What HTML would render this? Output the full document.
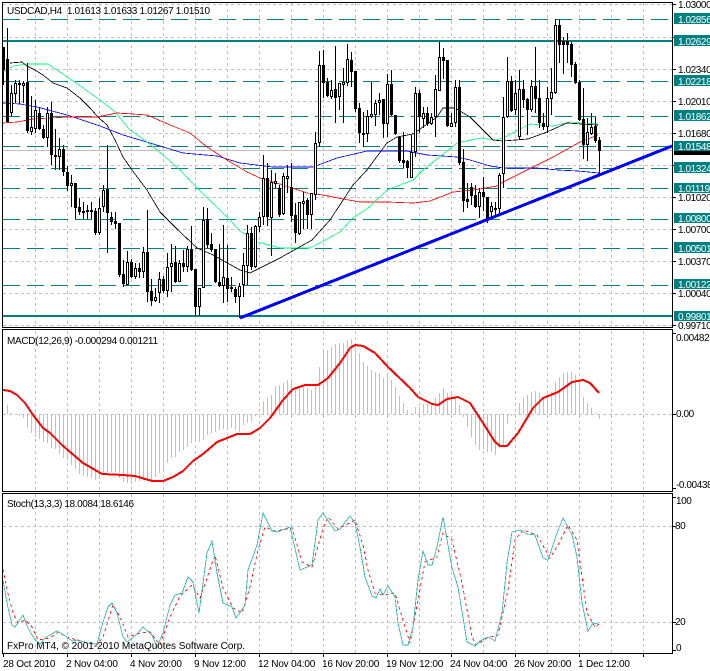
<!DOCTYPE html>
<html><head><meta charset="utf-8"><style>
html,body{margin:0;padding:0;background:#fff;width:710px;height:671px;overflow:hidden}
svg{display:block}
text{font-family:"Liberation Sans",sans-serif;font-size:10px;fill:#000;letter-spacing:-.42px}
.l{fill:#fff}
.t{letter-spacing:-.2px}
.h{letter-spacing:0}
</style></head><body>
<svg width="710" height="671" viewBox="0 0 710 671" xmlns="http://www.w3.org/2000/svg">
<rect width="710" height="671" fill="#fff"/>
<g shape-rendering="crispEdges" fill="none">
<!-- grid -->
<path stroke="#c0c0c0" stroke-dasharray="3 3" d="M35.5 3V327M67.5 3V327M99.5 3V327M131.5 3V327M163.5 3V327M195.5 3V327M227.5 3V327M259.5 3V327M291.5 3V327M323.5 3V327M355.5 3V327M387.5 3V327M419.5 3V327M451.5 3V327M483.5 3V327M515.5 3V327M547.5 3V327M579.5 3V327M611.5 3V327M643.5 3V327
M35.5 331V491M67.5 331V491M99.5 331V491M131.5 331V491M163.5 331V491M195.5 331V491M227.5 331V491M259.5 331V491M291.5 331V491M323.5 331V491M355.5 331V491M387.5 331V491M419.5 331V491M451.5 331V491M483.5 331V491M515.5 331V491M547.5 331V491M579.5 331V491M611.5 331V491M643.5 331V491
M35.5 494V653M67.5 494V653M99.5 494V653M131.5 494V653M163.5 494V653M195.5 494V653M227.5 494V653M259.5 494V653M291.5 494V653M323.5 494V653M355.5 494V653M387.5 494V653M419.5 494V653M451.5 494V653M483.5 494V653M515.5 494V653M547.5 494V653M579.5 494V653M611.5 494V653M643.5 494V653
M3 4.5H672M3 37.5H672M3 69.5H672M3 101.5H672M3 133.5H672M3 165.5H672M3 197.5H672M3 229.5H672M3 261.5H672M3 293.5H672M3 325.5H672
M3 414.5H672M3 526.5H672M3 622.5H672"/>
<path stroke="#c0c0c0" d="M3 150.5H672"/>
<!-- teal levels -->
<path stroke="#008080" stroke-dasharray="17 7" d="M3 19.5H672M3 81.5H672M3 116.5H672M3 146.5H672M3 168.5H672M3 188.5H672M3 219.5H672M3 248.5H672M3 285.5H672"/>
<path stroke="#008080" stroke-width="2" d="M3 41H672M3 316H672"/>
<!-- moving averages -->
<g stroke-width=".8">
<path stroke="#0000ff" d="M3 103L20 104L37 107L67 115L100 126L123 135L150 143L183 153L217 156L240 163L273 167L313 167L337 158L367 151L407 151L427 155L457 157L470 160L490 166L503 168L537 168L558 170L578 171L599 173"/>
<path stroke="#ff0000" d="M3 123L17 122L33 119L50 118L67 117L97 117L117 113L147 115L170 125L190 133L207 147L227 160L247 172L260 178L283 185L307 193L323 195L343 199L360 202L387 202L413 203L430 201L453 192L473 190L497 186L503 182L527 170L533 167L553 157L580 142L598 135"/>
<path stroke="#00ff7f" d="M3 72L13 66L27 64L48 64L67 77L83 88L97 98L113 110L130 130L147 142L163 155L180 170L197 188L227 217L240 231L257 242L280 248L310 248L340 232L353 218L368 208L387 190L413 180L423 170L457 143L480 138L495 140L503 138L530 124L553 126L570 122L598 124"/>
<path stroke="#000" d="M10 63L22 62L27 66L35 70L43 75L53 83L67 88L80 98L90 108L98 117L107 125L115 140L123 157L132 170L147 190L160 212L177 229L197 248L213 255L240 270L250 273L280 258L312 240L330 220L353 185L367 170L387 143L397 137L413 134L437 117L443 108L455 108L470 117L480 127L493 140L503 141L528 139L547 132L567 123L598 125"/>
</g>
<!-- candles wicks -->
<path stroke="#000" d="M3.5 47V85M7.5 28V123M11.5 85V117M15.5 80V103M19.5 80V104M23.5 81V103M27.5 63V133M31.5 96V135M35.5 100V133M39.5 107V130M43.5 125V139M47.5 107V147M51.5 102V165M55.5 129V170M59.5 138V170M63.5 145V176M67.5 166V191M71.5 175V207M75.5 183V219M79.5 198V215M83.5 202V219M87.5 205V219M91.5 202V219M95.5 208V235M99.5 198V235M103.5 185V212M107.5 145V253M111.5 212V225M115.5 212V229M119.5 223V277M123.5 260V287M127.5 251V286M131.5 259V278M135.5 263V279M139.5 263V278M143.5 247V278M147.5 210V302M151.5 279V306M155.5 288V302M159.5 272V303M163.5 276V293M167.5 253V297M171.5 244V292M175.5 246V283M179.5 260V282M183.5 250V272M187.5 246V272M191.5 226V271M195.5 269V316M199.5 288V316M203.5 207V288M207.5 208V248M211.5 233V252M215.5 249V283M219.5 244V287M223.5 225V303M227.5 245V302M231.5 277V292M235.5 287V303M239.5 283V318M243.5 253V297M247.5 225V285M251.5 227V270M255.5 225V268M259.5 212V232M263.5 155V225M267.5 163V226M271.5 170V256M275.5 173V188M279.5 185V217M283.5 173V215M287.5 165V193M291.5 163V222M295.5 203V243M299.5 202V235M303.5 192V229M307.5 198V229M311.5 193V229M315.5 132V200M319.5 51V147M323.5 50V98M327.5 78V97M331.5 80V99M335.5 46V123M339.5 83V110M343.5 68V123M347.5 44V86M351.5 52V87M355.5 71V112M359.5 103V143M363.5 112V147M367.5 110V142M371.5 82V118M375.5 100V126M379.5 93V115M383.5 99V138M387.5 74V137M391.5 70V116M395.5 115V135M399.5 137V163M403.5 132V168M407.5 160V178M411.5 135V178M415.5 87V157M419.5 90V133M423.5 107V128M427.5 107V126M431.5 113V125M435.5 75V137M439.5 42V91M443.5 48V79M447.5 60V127M451.5 113V127M455.5 80V127M459.5 80V165M463.5 149V212M467.5 183V208M471.5 183V205M475.5 185V208M479.5 188V218M483.5 177V211M487.5 197V223M491.5 202V218M495.5 202V218M499.5 173V213M503.5 97V188M507.5 57V118M511.5 76V112M515.5 80V115M519.5 70V140M523.5 80V108M527.5 98V135M531.5 80V112M535.5 47V113M539.5 80V128M543.5 113V130M547.5 87V133M551.5 68V115M555.5 19V94M559.5 19V63M563.5 37V74M567.5 33V63M571.5 42V77M575.5 62V84M579.5 80V121M583.5 88V159M587.5 118V161M591.5 113V135M595.5 117V143M599.5 137V174"/>
<!-- candle bodies -->
<path stroke="#000" stroke-width="3" d="M3.5 47V70M7.5 59V122M19.5 83V85M27.5 82V131M39.5 113V129M43.5 129V138M51.5 113V155M55.5 155V157M63.5 149V172M67.5 172V186M75.5 183V208M79.5 207V212M83.5 211V213M87.5 210V212M91.5 210V212M95.5 211V233M107.5 189V213M111.5 217V222M115.5 221V224M119.5 223V275M123.5 274V284M131.5 262V277M139.5 268V272M147.5 252V292M151.5 291V301M163.5 279V291M175.5 262V282M183.5 263V267M191.5 249V270M195.5 269V307M207.5 219V245M211.5 244V250M215.5 249V282M219.5 282V286M227.5 278V289M231.5 287V289M235.5 289V297M251.5 233V267M267.5 178V217M279.5 188V215M291.5 187V216M295.5 215V233M307.5 200V215M323.5 65V83M327.5 82V96M335.5 89V98M351.5 60V72M355.5 71V109M359.5 108V133M363.5 133V135M383.5 99V124M391.5 84V115M395.5 115V134M399.5 137V161M403.5 160V163M407.5 161V168M419.5 93V117M427.5 113V124M443.5 57V61M447.5 60V126M459.5 87V163M463.5 162V201M467.5 199V202M471.5 187V196M475.5 195V207M483.5 192V197M487.5 197V220M495.5 208V210M511.5 81V111M523.5 89V100M527.5 99V110M535.5 86V99M539.5 98V123M543.5 123V127M559.5 25V45M563.5 41V45M567.5 41V45M571.5 44V65M575.5 64V83M579.5 82V120M583.5 119V145M595.5 126V141M599.5 140V151
M11.5 93V113M15.5 83V94M23.5 83V86M31.5 127V132M35.5 110V129M47.5 113V138M59.5 149V157M71.5 183V186M99.5 208V233M103.5 190V207M127.5 262V285M135.5 268V277M143.5 252V272M155.5 297V301M159.5 279V293M167.5 267V291M171.5 263V267M179.5 263V282M187.5 249V267M199.5 288V307M203.5 220V288M223.5 277V286M239.5 286V297M243.5 265V285M247.5 233V266M255.5 226V267M259.5 217V227M263.5 178V217M271.5 182V218M275.5 181V184M283.5 176V214M287.5 176V179M299.5 202V234M303.5 201V204M311.5 193V215M315.5 143V195M319.5 65V143M331.5 90V97M339.5 83V97M343.5 82V85M347.5 59V83M367.5 116V134M371.5 114V117M375.5 103V115M379.5 100V103M387.5 84V124M411.5 152V178M415.5 93V152M423.5 113V119M431.5 117V124M435.5 89V117M439.5 57V91M451.5 123V127M455.5 87V123M479.5 192V207M491.5 206V212M499.5 175V209M503.5 117V174M507.5 81V117M515.5 93V110M519.5 89V137M531.5 86V110M547.5 98V127M551.5 92V99M555.5 25V93M587.5 132V145M591.5 127V134"/>
<path stroke="#fff" d="M11.5 94V112M15.5 84V93M23.5 84V85M31.5 128V131M35.5 111V128M47.5 114V137M59.5 150V156M71.5 184V185M99.5 209V232M103.5 191V206M127.5 263V284M135.5 269V276M143.5 253V271M155.5 298V300M159.5 280V292M167.5 268V290M171.5 264V266M179.5 264V281M187.5 250V266M199.5 289V306M203.5 221V287M223.5 278V285M239.5 287V296M243.5 266V284M247.5 234V265M255.5 227V266M259.5 218V226M263.5 179V216M271.5 183V217M275.5 182V183M283.5 177V213M287.5 177V178M299.5 203V233M303.5 202V203M311.5 194V214M315.5 144V194M319.5 66V142M331.5 91V96M339.5 84V96M343.5 83V84M347.5 60V82M367.5 117V133M371.5 115V116M375.5 104V114M379.5 101V102M387.5 85V123M411.5 153V177M415.5 94V151M423.5 114V118M431.5 118V123M435.5 90V116M439.5 58V90M451.5 124V126M455.5 88V122M479.5 193V206M491.5 207V211M499.5 176V208M503.5 118V173M507.5 82V116M515.5 94V109M519.5 90V136M531.5 87V109M547.5 99V126M551.5 93V98M555.5 26V92M587.5 133V144M591.5 128V133"/>
<!-- trend line -->
<path stroke="#0000ff" stroke-width="3" d="M240 318L672 146"/>
<!-- MACD hist -->
<path stroke="#c0c0c0" d="M7.5 405V414M11.5 413V414M15.5 414V415M19.5 414V416M23.5 414V418M27.5 414V428M31.5 414V433M35.5 414V437M39.5 414V439M43.5 414V442M47.5 414V443M51.5 414V448M55.5 414V449M59.5 414V454M63.5 414V458M67.5 414V460M71.5 414V465M75.5 414V469M79.5 414V474M83.5 414V476M87.5 414V477M91.5 414V478M95.5 414V480M99.5 414V479M103.5 414V473M107.5 414V472M111.5 414V472M115.5 414V472M119.5 414V478M123.5 414V482M127.5 414V483M131.5 414V483M135.5 414V482M139.5 414V481M143.5 414V480M147.5 414V480M151.5 414V480M155.5 414V477M159.5 414V473M163.5 414V470M167.5 414V463M171.5 414V458M175.5 414V457M179.5 414V452M183.5 414V450M187.5 414V447M191.5 414V443M195.5 414V440M199.5 414V442M203.5 414V440M207.5 414V435M211.5 414V433M215.5 414V432M219.5 414V430M223.5 414V429M227.5 414V428M231.5 414V428M235.5 414V430M239.5 414V432M243.5 414V425M247.5 414V423M251.5 414V422M255.5 414V416M259.5 413V414M263.5 401V414M267.5 398V414M271.5 395V414M275.5 386V414M279.5 385V414M283.5 383V414M287.5 380V414M291.5 379V414M295.5 387V414M299.5 388V414M303.5 387V414M307.5 388V414M311.5 390V414M315.5 385V414M319.5 367V414M323.5 352V414M327.5 350V414M331.5 347V414M335.5 344V414M339.5 343V414M343.5 343V414M347.5 340V414M351.5 339V414M355.5 343V414M359.5 353V414M363.5 362V414M367.5 366V414M371.5 370V414M375.5 372V414M379.5 373V414M383.5 378V414M387.5 374V414M391.5 380V414M395.5 387V414M399.5 396V414M403.5 403V414M407.5 410V414M411.5 413V414M415.5 407V414M419.5 407V414M423.5 404V414M427.5 404V414M431.5 404V414M435.5 398V414M439.5 393V414M443.5 388V414M447.5 393V414M451.5 393V414M455.5 398V414M459.5 405V414M463.5 414V417M467.5 414V427M471.5 414V437M475.5 414V445M479.5 414V450M483.5 414V449M487.5 414V452M491.5 414V452M495.5 414V455M499.5 414V448M503.5 414V445M507.5 414V424M511.5 414V416M519.5 403V414M523.5 398V414M527.5 395V414M531.5 392V414M535.5 391V414M539.5 393V414M543.5 398V414M547.5 397V414M551.5 392V414M555.5 382V414M559.5 377V414M563.5 373V414M567.5 372V414M571.5 372V414M575.5 375V414M579.5 380V414M583.5 397V414M587.5 403V414M591.5 408V414M595.5 413V414M599.5 414V419"/>
<path stroke="#ff0000" stroke-width="2" d="M3 390L10 391L17 395L25 403L33 415L43 428L50 433L62 445L70 452L83 463L102 474L123 475L135 476L152 481L163 481L173 477L183 471L193 461L203 454L217 442L237 434L250 434L260 428L270 418L283 400L293 389L305 385L318 385L328 378L340 363L350 348L355 345L363 346L375 353L388 367L410 388L418 397L432 404L438 405L447 399L458 397L470 403L483 423L495 442L500 446L507 446L518 433L533 408L543 398L558 392L572 382L583 380L590 383L599 393"/>
<!-- Stoch -->
<path stroke="#ff0000" stroke-width=".8" stroke-dasharray="3 3" d="M3 569L7 590L13 613L18 623L25 620L32 627L38 640L50 638L58 632L67 637L80 641L97 645L103 637L113 605L120 617L128 637L140 633L150 632L160 645L170 617L180 596L192 585L200 598L215 555L223 588L233 608L242 613L250 587L258 550L265 527L275 531L292 528L302 562L312 567L322 532L328 517L338 529L355 520L363 545L368 570L375 593L383 595L395 593L402 617L410 643L418 600L425 562L437 557L443 533L452 540L462 583L472 637L476 645L487 638L498 635L508 590L515 540L523 530L537 535L550 558L558 545L568 525L577 540L587 613L595 627L599 624"/>
<path stroke="#20b2aa" stroke-width=".8" d="M3 580L7 603L12 625L15 627L23 615L28 628L35 640L40 644L45 638L50 635L57 631L67 637L72 641L78 640L87 643L97 644L103 622L108 607L112 603L117 613L123 637L127 642L137 634L143 627L152 635L157 647L163 633L170 605L175 595L182 593L188 577L193 582L199 613L207 553L212 541L217 573L223 603L232 607L236 618L245 605L248 570L257 545L263 513L272 531L277 532L290 527L300 570L312 565L318 520L323 513L335 531L340 529L350 516L355 523L360 547L365 577L372 596L376 598L380 589L383 595L388 586L395 597L398 623L403 645L408 645L413 627L418 580L423 551L428 565L432 565L437 547L443 517L452 568L458 587L467 642L475 646L480 641L488 637L495 641L502 613L507 563L512 532L520 530L527 534L535 535L543 558L548 560L557 533L563 518L572 535L577 557L582 603L588 631L593 623L598 624"/>
<!-- frames -->
<path stroke="#000" d="M2.5 2.5H672.5V327.5H2.5ZM2.5 329.5H672.5V491.5H2.5ZM2.5 493.5H672.5V653.5H2.5Z"/>
<path stroke="#000" d="M673 4.5h3M673 37.5h3M673 69.5h3M673 101.5h3M673 133.5h3M673 165.5h3M673 197.5h3M673 229.5h3M673 261.5h3M673 293.5h3M673 325.5h3M673 333.5h3M673 414.5h3M673 488.5h3M673 497.5h3M673 526.5h3M673 622.5h3M673 650.5h3
M3.5 654v3M67.5 654v3M131.5 654v3M195.5 654v3M259.5 654v3M323.5 654v3M387.5 654v3M451.5 654v3M515.5 654v3M579.5 654v3M643.5 654v3"/>
</g>
<!-- axis labels -->
<text x="678" y="8">1.03000</text>
<text x="678" y="73">1.02340</text>
<text x="678" y="105">1.02010</text>
<text x="678" y="137">1.01680</text>
<text x="678" y="201">1.01020</text>
<text x="678" y="233">1.00700</text>
<text x="678" y="265">1.00370</text>
<text x="678" y="297">1.00040</text>
<text x="678" y="329">0.99710</text>
<g shape-rendering="crispEdges">
<rect x="674" y="150" width="36" height="5" fill="#000"/>
<rect x="674" y="13" width="36" height="11" fill="#008080"/>
<rect x="674" y="35" width="36" height="11" fill="#008080"/>
<rect x="674" y="75" width="36" height="11" fill="#008080"/>
<rect x="674" y="110" width="36" height="11" fill="#008080"/>
<rect x="674" y="141" width="36" height="10" fill="#008080"/>
<rect x="674" y="162" width="36" height="11" fill="#008080"/>
<rect x="674" y="183" width="36" height="10" fill="#008080"/>
<rect x="674" y="213" width="36" height="10" fill="#008080"/>
<rect x="674" y="242" width="36" height="11" fill="#008080"/>
<rect x="674" y="279" width="36" height="10" fill="#008080"/>
<rect x="674" y="311" width="36" height="10" fill="#008080"/>
</g>
<text class="l" x="678" y="23">1.02856</text>
<text class="l" x="678" y="45">1.02629</text>
<text class="l" x="678" y="85">1.02218</text>
<text class="l" x="678" y="120">1.01862</text>
<text class="l" x="678" y="150">1.01548</text>
<text class="l" x="678" y="172">1.01324</text>
<text class="l" x="678" y="192">1.01119</text>
<text class="l" x="678" y="222">1.00800</text>
<text class="l" x="678" y="252">1.00501</text>
<text class="l" x="678" y="288">1.00122</text>
<text class="l" x="678" y="320">0.99801</text>
<text x="676" y="341">0.00482</text>
<text x="676" y="417">0.00</text>
<text x="676" y="488">-0.00438</text>
<text x="676" y="504">100</text>
<text x="675" y="529">80</text>
<text x="675" y="625">20</text>
<text x="676" y="651">0</text>
<!-- panel titles -->
<text class="h" x="7" y="14" textLength="203" xml:space="preserve">USDCAD,H4  1.01613 1.01633 1.01267 1.01510</text>
<text class="h" x="7" y="344" textLength="151">MACD(12,26,9) -0.000294 0.001211</text>
<text class="h" x="7" y="507" textLength="127">Stoch(13,3,3) 18.0084 18.6146</text>
<text class="h" x="7" y="649" textLength="238">FxPro MT4, © 2001-2010 MetaQuotes Software Corp.</text>
<!-- time labels -->
<text class="t" x="3" y="667">28 Oct 2010</text>
<text class="t" x="66" y="667">2 Nov 04:00</text>
<text class="t" x="130" y="667">4 Nov 20:00</text>
<text class="t" x="194" y="667">9 Nov 12:00</text>
<text class="t" x="258" y="667">12 Nov 04:00</text>
<text class="t" x="322" y="667">16 Nov 20:00</text>
<text class="t" x="386" y="667">19 Nov 12:00</text>
<text class="t" x="450" y="667">24 Nov 04:00</text>
<text class="t" x="514" y="667">26 Nov 20:00</text>
<text class="t" x="578" y="667">1 Dec 12:00</text>
</svg>
</body></html>
